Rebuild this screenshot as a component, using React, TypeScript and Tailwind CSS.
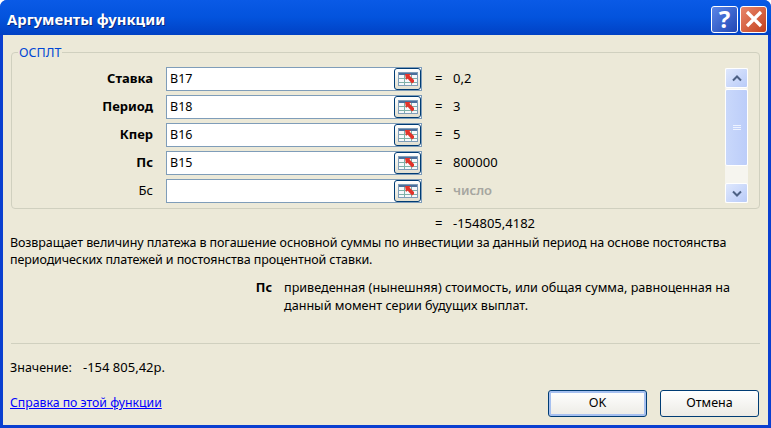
const font = { fontFamily: '"Noto Sans", "DejaVu Sans", sans-serif' }

const args = [
  { label: 'Ставка', ref: 'B17', value: '0,2', bold: true },
  { label: 'Период', ref: 'B18', value: '3', bold: true },
  { label: 'Кпер', ref: 'B16', value: '5', bold: true },
  { label: 'Пс', ref: 'B15', value: '800000', bold: true },
  { label: 'Бс', ref: '', value: 'число', bold: false },
]

function RefButton() {
  return (
    <div className="w-[27px] h-[22px] shrink-0 rounded-[3px] border border-[#003c74] bg-gradient-to-b from-[#fff] to-[#e3e0d0] flex items-center justify-center">
      <svg width="20" height="14" viewBox="0 0 20 14">
        <rect x="0.5" y="0.5" width="19" height="13" fill="#f6f8fb" stroke="#7f9db9" />
        <rect x="1" y="1" width="18" height="2" fill="#4a6f9c" />
        <path d="M1 6.5h18M1 10.5h18M6.5 3v10M13.5 3v10" stroke="#7fb0a8" />
        <path d="M7 2h6l-1.5 1.5L16 8v2l-2 1.5-4.5-5L8 8z" fill="#e2332a" />
      </svg>
    </div>
  )
}

function ArgRow({ label, ref: cell, value, bold }: (typeof args)[number]) {
  return (
    <div className="flex items-center h-[24px] mb-[4px]">
      <div className={`w-[141px] text-right text-[13px] text-black ${bold ? 'font-bold' : ''}`}>{label}</div>
      <div className="ml-[13px] w-[256px] h-[24px] bg-white border border-[#7f9db9] flex items-center justify-between pl-[3px]">
        <span className="text-[12.5px] text-black">{cell}</span>
        <RefButton />
      </div>
      <span className="ml-[13px] w-[18px] text-[13px] text-black">=</span>
      <span className={`text-[13px] ${bold ? 'text-black' : 'text-[#a6a6a0] font-semibold'}`}>{value}</span>
    </div>
  )
}

function ScrollBar() {
  const btn = 'h-[20px] shrink-0 rounded-[2px] border border-white bg-gradient-to-br from-[#dfe8fd] to-[#b9cbf8] flex items-center justify-center'
  return (
    <div className="absolute right-[11px] top-[8px] w-[23px] h-[135px] bg-[#f6f5ef] flex flex-col">
      <div className={btn}>
        <svg width="10" height="7" viewBox="0 0 10 7"><path d="M1 5.5l4-4 4 4" fill="none" stroke="#4d6185" strokeWidth="2" /></svg>
      </div>
      <div className="h-[77px] mt-[1px] rounded-[2px] border border-white bg-gradient-to-r from-[#c9d8fb] to-[#bccdf9] flex items-center justify-center">
        <svg width="8" height="8" viewBox="0 0 8 8"><path d="M0 1.5h8M0 3.5h8M0 5.5h8" stroke="#eef3ff" /></svg>
      </div>
      <div className="flex-1" />
      <div className={btn}>
        <svg width="10" height="7" viewBox="0 0 10 7"><path d="M1 1.5l4 4 4-4" fill="none" stroke="#4d6185" strokeWidth="2" /></svg>
      </div>
    </div>
  )
}

export default function App() {
  return (
    <div style={font} className="w-[771px] h-[428px] overflow-hidden bg-[#0a3fd0] flex flex-col rounded-t-[7px]">
      {/* title bar */}
      <div className="h-[35px] shrink-0 flex items-center justify-between pl-[7px] pr-[4px] pt-[3px] bg-gradient-to-b from-[#0a5ae6] via-[#0353dd] to-[#0141c4]">
        <span className="text-[14.8px] font-bold text-white [text-shadow:1px_1px_0_#0a2a80]">Аргументы функции</span>
        <div className="flex gap-[2px]">
          <div className="w-[27px] h-[27px] rounded-[3px] border border-white bg-gradient-to-br from-[#5b86e8] to-[#2146b4] flex items-center justify-center text-white text-[24px] font-bold leading-none">?</div>
          <div className="w-[27px] h-[27px] rounded-[3px] border border-white bg-gradient-to-br from-[#e8866a] to-[#c43f1a] flex items-center justify-center">
            <svg width="20" height="20" viewBox="0 0 20 20"><path d="M3 3l14 14M17 3L3 17" stroke="#fff" strokeWidth="3.2" /></svg>
          </div>
        </div>
      </div>

      {/* client area */}
      <div className="mx-[3px] mb-[3px] flex-1 bg-[#ece9d8] px-[8px] relative flex flex-col">
        <fieldset className="relative mt-[10px] h-[164px] border border-[#d0d0bf] rounded-[4px] px-0 pt-[7px] m-0">
          <legend className="ml-[6px] px-[1px] text-[12.5px] leading-[15px] text-[#0046d5]">ОСПЛТ</legend>
          {args.map((a) => (
            <ArgRow key={a.label} {...a} />
          ))}
          <ScrollBar />
        </fieldset>

        <div className="flex text-[13px] text-black h-[20px] items-center mt-[5px]">
          <span className="ml-[424px] w-[18px]">=</span>
          <span>-154805,4182</span>
        </div>

        <p className="text-[12.5px] tracking-[-0.1px] leading-[17px] text-black -ml-[1px] whitespace-nowrap">
          Возвращает величину платежа в погашение основной суммы по инвестиции за данный период на основе постоянства
          <br />
          периодических платежей и постоянства процентной ставки.
        </p>

        <div className="flex mt-[11px] text-[12.6px] leading-[18px] text-black">
          <div className="w-[261px] text-right font-bold">Пс</div>
          <div className="ml-[12px] whitespace-nowrap">
            приведенная (нынешняя) стоимость, или общая сумма, равноценная на
            <br />
            данный момент серии будущих выплат.
          </div>
        </div>

        <div className="mt-[28px] border-t border-[#d0d0bf]" />

        <div className="mt-[15px] flex text-[13px] leading-[17px] text-black -ml-[1px]">
          <span className="text-[12.5px] w-[73px]">Значение:</span>
          <span>-154 805,42р.</span>
        </div>

        <div className="flex items-center justify-between mt-[14px] mr-[1px]">
          <a href="#" className="text-[12.25px] text-[#0000ff] underline -ml-[1px]">Справка по этой функции</a>
          <div className="flex gap-[13px]">
            <button className="w-[99px] h-[27px] rounded-[3px] border border-[#003c74] bg-gradient-to-b from-white to-[#ecebe5] text-[12.5px] text-black shadow-[inset_0_0_0_2px_#a6c0f0]">OK</button>
            <button className="w-[99px] h-[27px] rounded-[3px] border border-[#003c74] bg-gradient-to-b from-white to-[#ecebe5] text-[12.5px] text-black">Отмена</button>
          </div>
        </div>
      </div>
    </div>
  )
}
